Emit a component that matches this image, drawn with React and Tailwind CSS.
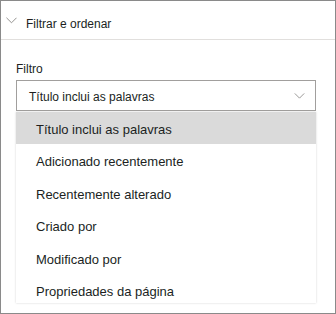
import React, { useState } from 'react';

const options = [
  'Título inclui as palavras',
  'Adicionado recentemente',
  'Recentemente alterado',
  'Criado por',
  'Modificado por',
  'Propriedades da página',
];

function Chevron({ className }) {
  return (
    <svg viewBox="0 0 12 7" className={className} fill="none" stroke="currentColor" strokeWidth="1">
      <polyline points="0.5,0.5 6,6 11.5,0.5" />
    </svg>
  );
}

export default function App() {
  const [selected, setSelected] = useState(0);

  return (
    <div
      className="w-[336px] h-[314px] bg-white border border-[#8a8a8a] text-[#201f1e] overflow-hidden"
      style={{ fontFamily: '"Liberation Sans", Arial, sans-serif' }}
    >
      {/* section header */}
      <div className="h-[39px] flex items-start border-b border-[#e1dfdd]">
        <Chevron className="w-[11px] h-[7px] mt-[16px] ml-[5px] text-[#8a8886]" />
        <span className="ml-[9px] mt-[15px] text-[12px] leading-[16px]">Filtrar e ordenar</span>
      </div>

      <div className="pl-[15px] pr-[19px] pt-[21px]">
        <label className="block text-[12px] leading-[16px]">Filtro</label>

        <div className="mt-[3px] h-[31px] border border-[#a19f9d] flex items-start justify-between pl-[12px] pr-[10px]">
          <span className="mt-[8px] text-[12px] leading-[16px]">{options[selected]}</span>
          <Chevron className="w-[11px] h-[6px] mt-[12px] text-[#8a8886]" />
        </div>

        <div className="mt-[1px] h-[191px] overflow-hidden bg-white shadow-[0_0_2px_rgba(0,0,0,0.18)]">
          {options.map((opt, i) => (
            <div
              key={opt}
              onClick={() => setSelected(i)}
              className={`h-[32.4px] flex items-center pl-[20px] text-[13px] cursor-pointer ${
                i === selected ? 'bg-[#dadada]' : 'bg-white'
              }`}
            >
              <span className="mt-[3px]">{opt}</span>
            </div>
          ))}
        </div>
      </div>
    </div>
  );
}
